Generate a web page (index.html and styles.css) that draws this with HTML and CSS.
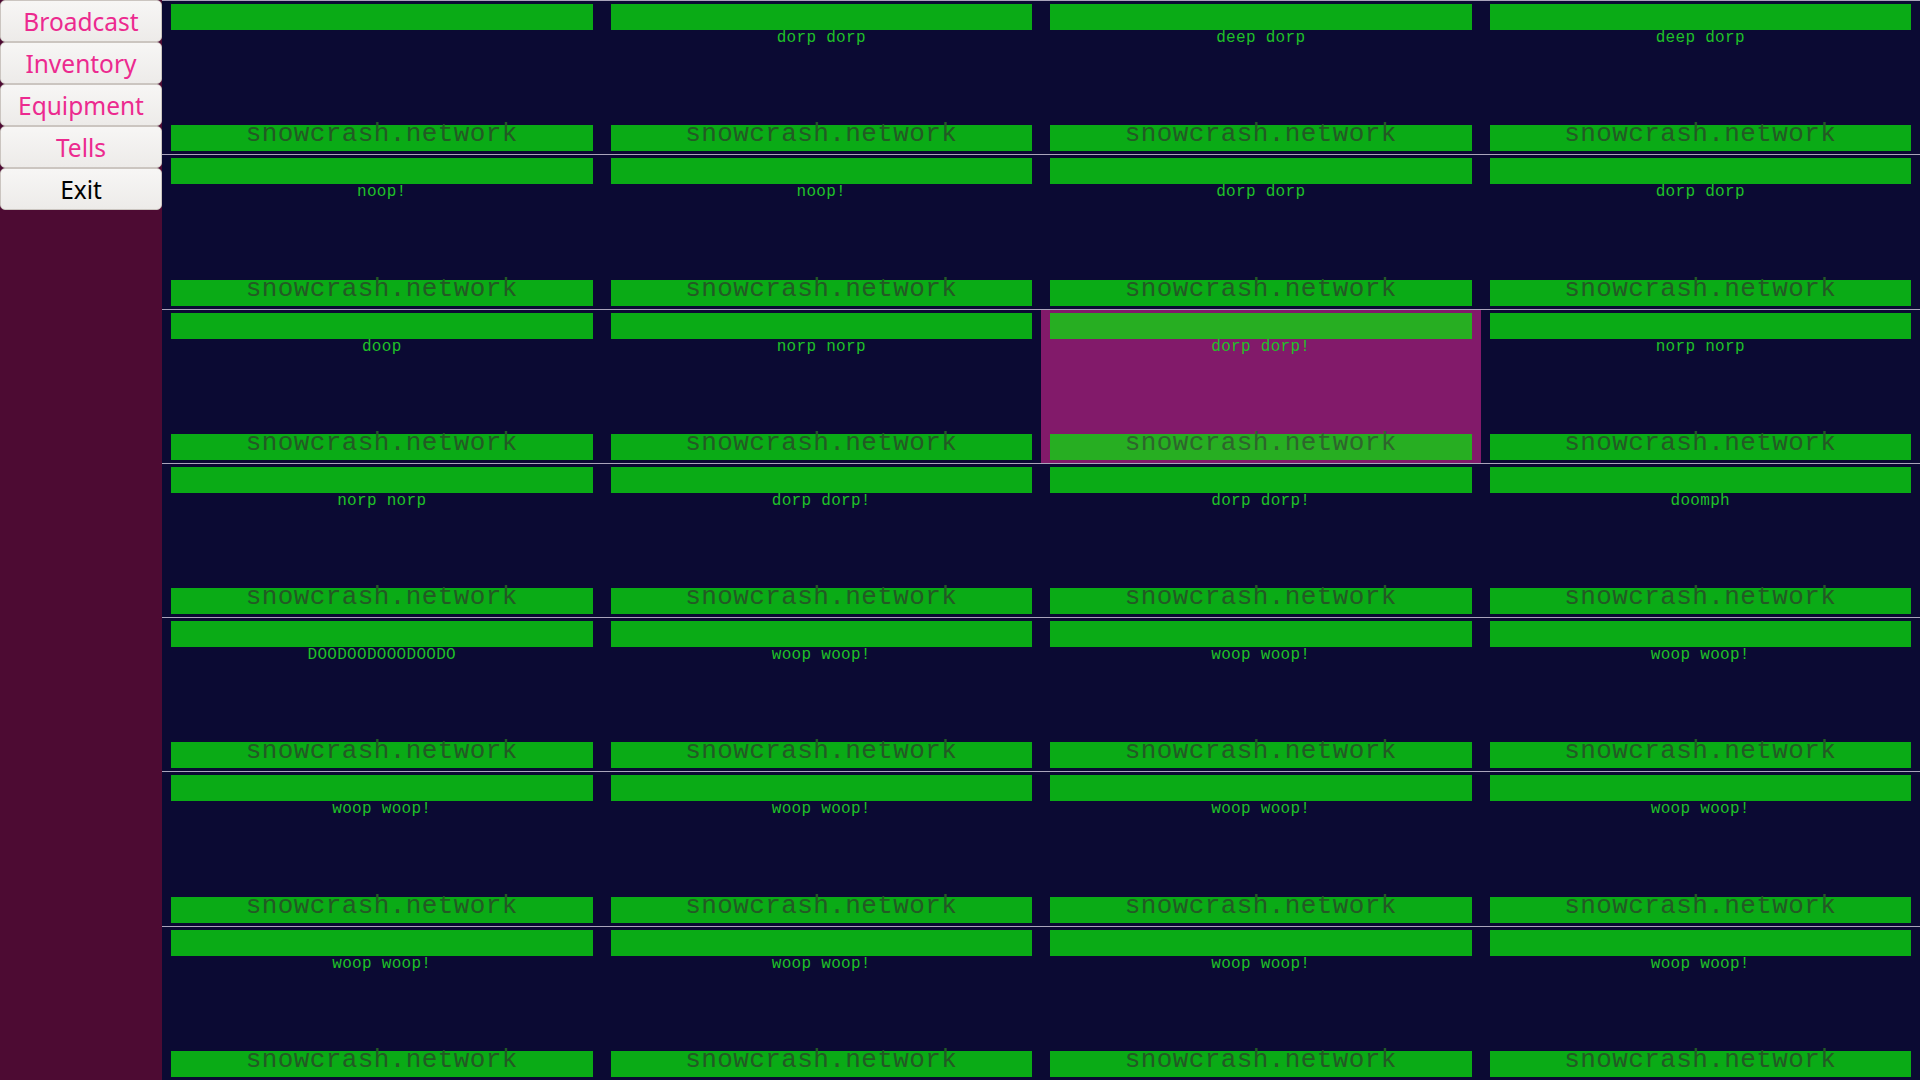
FILE: index.html
```html
<!DOCTYPE html>
<html>
<head>
<meta charset="utf-8">
<title>snowcrash.network</title>
<link rel="stylesheet" href="styles.css">
</head>
<body>

<div class="SIDEBAR">
  <button class="MENUBTN">Broadcast</button>
  <button class="MENUBTN">Inventory</button>
  <button class="MENUBTN">Equipment</button>
  <button class="MENUBTN">Tells</button>
  <button class="MENUBTN EXIT">Exit</button>
</div>

<div class="BOARD">
  <!-- row 1 -->
  <div class="CELL"><div class="BAR"></div><div class="LABEL"></div><div class="BAR SITE">snowcrash.network</div></div>
  <div class="CELL"><div class="BAR"></div><div class="LABEL">dorp dorp</div><div class="BAR SITE">snowcrash.network</div></div>
  <div class="CELL"><div class="BAR"></div><div class="LABEL">deep dorp</div><div class="BAR SITE">snowcrash.network</div></div>
  <div class="CELL"><div class="BAR"></div><div class="LABEL">deep dorp</div><div class="BAR SITE">snowcrash.network</div></div>
  <!-- row 2 -->
  <div class="CELL"><div class="BAR"></div><div class="LABEL">noop!</div><div class="BAR SITE">snowcrash.network</div></div>
  <div class="CELL"><div class="BAR"></div><div class="LABEL">noop!</div><div class="BAR SITE">snowcrash.network</div></div>
  <div class="CELL"><div class="BAR"></div><div class="LABEL">dorp dorp</div><div class="BAR SITE">snowcrash.network</div></div>
  <div class="CELL"><div class="BAR"></div><div class="LABEL">dorp dorp</div><div class="BAR SITE">snowcrash.network</div></div>
  <!-- row 3 -->
  <div class="CELL"><div class="BAR"></div><div class="LABEL">doop</div><div class="BAR SITE">snowcrash.network</div></div>
  <div class="CELL"><div class="BAR"></div><div class="LABEL">norp norp</div><div class="BAR SITE">snowcrash.network</div></div>
  <div class="CELL SELECTED"><div class="BAR"></div><div class="LABEL">dorp dorp!</div><div class="BAR SITE">snowcrash.network</div></div>
  <div class="CELL"><div class="BAR"></div><div class="LABEL">norp norp</div><div class="BAR SITE">snowcrash.network</div></div>
  <!-- row 4 -->
  <div class="CELL"><div class="BAR"></div><div class="LABEL">norp norp</div><div class="BAR SITE">snowcrash.network</div></div>
  <div class="CELL"><div class="BAR"></div><div class="LABEL">dorp dorp!</div><div class="BAR SITE">snowcrash.network</div></div>
  <div class="CELL"><div class="BAR"></div><div class="LABEL">dorp dorp!</div><div class="BAR SITE">snowcrash.network</div></div>
  <div class="CELL"><div class="BAR"></div><div class="LABEL">doomph</div><div class="BAR SITE">snowcrash.network</div></div>
  <!-- row 5 -->
  <div class="CELL"><div class="BAR"></div><div class="LABEL">DOODOODOOODOODO</div><div class="BAR SITE">snowcrash.network</div></div>
  <div class="CELL"><div class="BAR"></div><div class="LABEL">woop woop!</div><div class="BAR SITE">snowcrash.network</div></div>
  <div class="CELL"><div class="BAR"></div><div class="LABEL">woop woop!</div><div class="BAR SITE">snowcrash.network</div></div>
  <div class="CELL"><div class="BAR"></div><div class="LABEL">woop woop!</div><div class="BAR SITE">snowcrash.network</div></div>
  <!-- row 6 -->
  <div class="CELL"><div class="BAR"></div><div class="LABEL">woop woop!</div><div class="BAR SITE">snowcrash.network</div></div>
  <div class="CELL"><div class="BAR"></div><div class="LABEL">woop woop!</div><div class="BAR SITE">snowcrash.network</div></div>
  <div class="CELL"><div class="BAR"></div><div class="LABEL">woop woop!</div><div class="BAR SITE">snowcrash.network</div></div>
  <div class="CELL"><div class="BAR"></div><div class="LABEL">woop woop!</div><div class="BAR SITE">snowcrash.network</div></div>
  <!-- row 7 -->
  <div class="CELL"><div class="BAR"></div><div class="LABEL">woop woop!</div><div class="BAR SITE">snowcrash.network</div></div>
  <div class="CELL"><div class="BAR"></div><div class="LABEL">woop woop!</div><div class="BAR SITE">snowcrash.network</div></div>
  <div class="CELL"><div class="BAR"></div><div class="LABEL">woop woop!</div><div class="BAR SITE">snowcrash.network</div></div>
  <div class="CELL"><div class="BAR"></div><div class="LABEL">woop woop!</div><div class="BAR SITE">snowcrash.network</div></div>
</div>

</body>
</html>
```

FILE: styles.css
```css
html, body {margin: 0; padding: 0; height: 100%; overflow: hidden;}
body {display: flex; background-color: #0b0a33;}

div.SIDEBAR {width: 162px; flex: none; background-color: #4d0b33; display: flex; flex-direction: column;}
button.MENUBTN {height: 42px; margin: 0; padding: 1px 0 0 0; border: 1px solid #cbc5c0; border-radius: 5px; background: linear-gradient(#f7f6f5, #edebe9); color: #ec2a8f; font-family: "Noto Sans", sans-serif; font-size: 24.5px; line-height: 39px; text-align: center;}
button.EXIT {color: #000000;}

div.BOARD {flex: 1; height: 100vh; display: grid; grid-template-columns: repeat(4, 1fr); grid-template-rows: repeat(7, 1fr);}
div.CELL {border-top: 1px solid #aaa5bb; padding: 3px 9px 3px 9px; display: flex; flex-direction: column; justify-content: space-between; min-height: 0;}
div.SELECTED {background-color: #821a6a;}
div.BAR {height: 26px; flex: none; background-color: #0aab16;}
div.SELECTED div.BAR {background-color: #27ae22;}
div.LABEL {flex: 1; color: #1fc128; font-family: "Liberation Mono", monospace; font-size: 16px; letter-spacing: 0.3px; line-height: 17px; text-align: center;}
div.SITE {color: #235a24; font-family: "Liberation Mono", monospace; font-size: 26px; letter-spacing: 0.4px; line-height: 19px; text-align: center;}
div.SELECTED div.SITE {color: #2e652c;}
```
